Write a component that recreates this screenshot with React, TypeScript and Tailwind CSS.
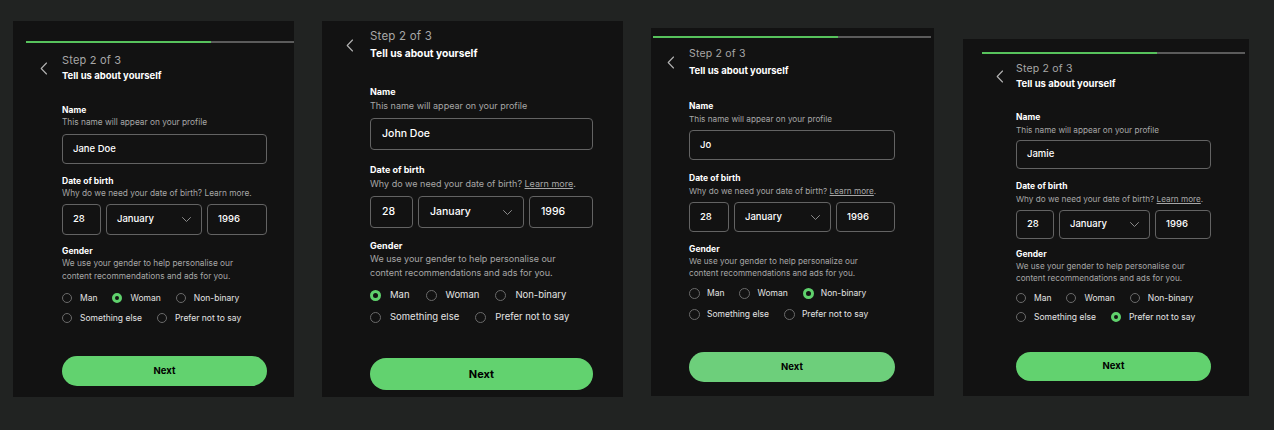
import React from 'react'

type Cfg = {
  name: string
  gender: string
  spelling: string
  underline: boolean
  card: string
  bar?: { wrap: string; fill: string }
  head: string
  chev: string
  headGap: string
  step: string
  title: string
  body: string
  nameMt: string
  label: string
  sub: string
  subGap: string
  inputMt: string
  inputH: string
  inputText: string
  dobMt: string
  dateMt: string
  dateH: string
  day: string
  year: string
  dateGap: string
  genderMt: string
  desc: string
  radiosMt: string
  rowGap: string
  rowH: string
  itemGap: string
  circle: string
  dot: string
  radioGap: string
  radioText: string
  btn: string
  btnText: string
  btnColor: string
  pb: string
}

const cards: Cfg[] = [
  {
    name: 'Jane Doe', gender: 'Woman', spelling: 'personalise', underline: false,
    card: 'mt-[21px] w-[281px] h-[376px]',
    bar: { wrap: 'mt-[20px] ml-[13px] h-[2px]', fill: 'w-[69%]' },
    head: 'mt-[10px] pl-[27px]', chev: 'w-[22px]', headGap: 'gap-[2px]',
    step: 'text-[11px] leading-[14px] tracking-[0.2px]', title: 'text-[9.5px] leading-[14px]',
    body: 'pl-[49px] pr-[27px]', nameMt: 'mt-[21px]',
    label: 'text-[8.5px] leading-[12px]', sub: 'text-[8.3px] leading-[12px]', subGap: 'mt-0',
    inputMt: 'mt-[6px]', inputH: 'h-[30px]', inputText: 'text-[9.5px] px-[10px]',
    dobMt: 'mt-[11px]', dateMt: 'mt-[5px]', dateH: 'h-[31px]', day: 'w-[39px]', year: 'w-[60px]', dateGap: 'gap-[5px]',
    genderMt: 'mt-[10px]', desc: 'text-[8.3px] leading-[13px]',
    radiosMt: 'mt-[8px]', rowGap: 'gap-[6px]', rowH: 'h-[14px]', itemGap: 'gap-[15px]',
    circle: 'w-[10px] h-[10px]', dot: 'border-[3px]', radioGap: 'gap-[8px]', radioText: 'text-[8.5px]',
    btn: 'h-[30px]', btnText: 'text-[9.5px]', btnColor: 'bg-[#62d26f]', pb: 'pb-[11px]',
  },
  {
    name: 'John Doe', gender: 'Man', spelling: 'personalise', underline: true,
    card: 'mt-[21px] w-[301px] h-[376px]',
    head: 'mt-[8px] pl-[24px]', chev: 'w-[24px]', headGap: 'gap-[2px]',
    step: 'text-[11.5px] leading-[15px] tracking-[0.2px]', title: 'text-[10.25px] leading-[15px]',
    body: 'pl-[48px] pr-[30px]', nameMt: 'mt-[24px]',
    label: 'text-[9px] leading-[13px]', sub: 'text-[9px] leading-[13px]', subGap: 'mt-[1px]',
    inputMt: 'mt-[6px]', inputH: 'h-[32px]', inputText: 'text-[10.5px] px-[11px]',
    dobMt: 'mt-[13px]', dateMt: 'mt-[6px]', dateH: 'h-[32px]', day: 'w-[43px]', year: 'w-[64px]', dateGap: 'gap-[5px]',
    genderMt: 'mt-[11px]', desc: 'text-[9px] leading-[14px]',
    radiosMt: 'mt-[7px]', rowGap: 'gap-[6px]', rowH: 'h-[16px]', itemGap: 'gap-[16px]',
    circle: 'w-[11px] h-[11px]', dot: 'border-[3px]', radioGap: 'gap-[9px]', radioText: 'text-[9.5px]',
    btn: 'h-[32px]', btnText: 'text-[11px]', btnColor: 'bg-[#62d26f]', pb: 'pb-[7px]',
  },
  {
    name: 'Jo', gender: 'Non-binary', spelling: 'personalize', underline: true,
    card: 'mt-[28px] ml-0 w-[283px] h-[368px]',
    bar: { wrap: 'mt-[8px] ml-[2px] mr-[3px] h-[2px]', fill: 'w-[66.5%]' },
    head: 'mt-[9px] pl-[16px]', chev: 'w-[22px]', headGap: 'gap-[3px]',
    step: 'text-[10.5px] leading-[14px] tracking-[0.2px]', title: 'text-[9.5px] leading-[14px]',
    body: 'pl-[38px] pr-[39px]', nameMt: 'mt-[22px]',
    label: 'text-[8.5px] leading-[12px]', sub: 'text-[8.2px] leading-[12px]', subGap: 'mt-[1px]',
    inputMt: 'mt-[5px]', inputH: 'h-[30px]', inputText: 'text-[9.5px] px-[10px]',
    dobMt: 'mt-[12px]', dateMt: 'mt-[5px]', dateH: 'h-[30px]', day: 'w-[40px]', year: 'w-[59px]', dateGap: 'gap-[5px]',
    genderMt: 'mt-[11px]', desc: 'text-[8.2px] leading-[12px]',
    radiosMt: 'mt-[7px]', rowGap: 'gap-[7px]', rowH: 'h-[14px]', itemGap: 'gap-[15px]',
    circle: 'w-[11px] h-[11px]', dot: 'border-[3px]', radioGap: 'gap-[7px]', radioText: 'text-[8.5px]',
    btn: 'h-[30px]', btnText: 'text-[9.5px]', btnColor: 'bg-[#6dcf7b]', pb: 'pb-[14px]',
  },
  {
    name: 'Jamie', gender: 'Prefer not to say', spelling: 'personalise', underline: true,
    card: 'mt-[39px] ml-[1px] w-[286px] h-[357px]',
    bar: { wrap: 'mt-[13px] ml-[19px] mr-[4px] h-[2px]', fill: 'w-[66.5%]' },
    head: 'mt-[8px] pl-[33px]', chev: 'w-[20px]', headGap: 'gap-[1px]',
    step: 'text-[10.5px] leading-[14px] tracking-[0.2px]', title: 'text-[9.5px] leading-[14px]',
    body: 'pl-[53px] pr-[38px]', nameMt: 'mt-[20px]',
    label: 'text-[8.5px] leading-[12px]', sub: 'text-[8.2px] leading-[12px]', subGap: 'mt-[1px]',
    inputMt: 'mt-[4px]', inputH: 'h-[29px]', inputText: 'text-[9.5px] px-[10px]',
    dobMt: 'mt-[11px]', dateMt: 'mt-[5px]', dateH: 'h-[29px]', day: 'w-[38px]', year: 'w-[56px]', dateGap: 'gap-[5px]',
    genderMt: 'mt-[9px]', desc: 'text-[8.2px] leading-[12px]',
    radiosMt: 'mt-[7px]', rowGap: 'gap-[5px]', rowH: 'h-[14px]', itemGap: 'gap-[15px]',
    circle: 'w-[10px] h-[10px]', dot: 'border-[3px]', radioGap: 'gap-[8px]', radioText: 'text-[8.5px]',
    btn: 'h-[29px]', btnText: 'text-[9.5px]', btnColor: 'bg-[#62d26f]', pb: 'pb-[15px]',
  },
]

function Radio({ c, label }: { c: Cfg; label: string }) {
  const on = c.gender === label
  return (
    <div className={`flex items-center ${c.radioGap}`}>
      <span
        className={`${c.circle} rounded-full shrink-0 ${on ? `${c.dot} border-[#5fd16c]` : 'border border-[#6a6a6a]'}`}
      />
      <span className={`${c.radioText} text-[#e4e4e4] whitespace-nowrap`}>{label}</span>
    </div>
  )
}

function Card({ c }: { c: Cfg }) {
  return (
    <div className={`${c.card} ${c.pb} shrink-0 bg-[#121212] flex flex-col`}>
      {c.bar ? (
        <div className={`${c.bar.wrap} bg-[#5b5b5b] flex`}>
          <div className={`${c.bar.fill} h-full bg-[#57c25c]`} />
        </div>
      ) : null}

      {/* header */}
      <div className={`${c.head} flex items-center`}>
        <div className={`${c.chev} shrink-0`}>
          <svg width="8" height="13" viewBox="0 0 8 13" fill="none">
            <path d="M6.5 1L1.2 6.5l5.3 5.5" stroke="#b3b3b3" strokeWidth="1.1" strokeLinecap="round" strokeLinejoin="round" />
          </svg>
        </div>
        <div className={`flex flex-col ${c.headGap}`}>
          <span className={`${c.step} text-[#a7a7a7]`}>Step 2 of 3</span>
          <span className={`${c.title} text-white font-bold`}>Tell us about yourself</span>
        </div>
      </div>

      <div className={`${c.body} flex flex-col flex-1`}>
        {/* name */}
        <div className={`${c.nameMt} flex flex-col`}>
          <span className={`${c.label} text-white font-bold`}>Name</span>
          <span className={`${c.sub} ${c.subGap} text-[#a7a7a7]`}>This name will appear on your profile</span>
        </div>
        <div className={`${c.inputMt} ${c.inputH} ${c.inputText} border border-[#636363] rounded-[4px] flex items-center text-white font-medium`}>
          {c.name}
        </div>

        {/* date of birth */}
        <div className={`${c.dobMt} flex flex-col`}>
          <span className={`${c.label} text-white font-bold`}>Date of birth</span>
          <span className={`${c.sub} ${c.subGap} text-[#a7a7a7] whitespace-nowrap`}>
            Why do we need your date of birth?{' '}
            <span className={c.underline ? 'underline' : ''}>Learn more</span>.
          </span>
        </div>
        <div className={`${c.dateMt} ${c.dateH} ${c.dateGap} flex`}>
          <div className={`${c.day} ${c.inputText} border border-[#636363] rounded-[4px] flex items-center text-white font-medium`}>28</div>
          <div className={`flex-1 ${c.inputText} border border-[#636363] rounded-[4px] flex items-center justify-between text-white font-medium`}>
            <span>January</span>
            <svg width="9" height="5" viewBox="0 0 9 5" fill="none">
              <path d="M0.5 0.5l4 4 4-4" stroke="#8a8a8a" strokeWidth="1" strokeLinecap="round" strokeLinejoin="round" />
            </svg>
          </div>
          <div className={`${c.year} ${c.inputText} border border-[#636363] rounded-[4px] flex items-center text-white font-medium`}>1996</div>
        </div>

        {/* gender */}
        <div className={`${c.genderMt} flex flex-col`}>
          <span className={`${c.label} text-white font-bold`}>Gender</span>
          <span className={`${c.desc} text-[#a7a7a7]`}>
            We use your gender to help {c.spelling} our
            <br />
            content recommendations and ads for you.
          </span>
        </div>
        <div className={`${c.radiosMt} ${c.rowGap} flex flex-col`}>
          <div className={`${c.rowH} ${c.itemGap} flex items-center`}>
            <Radio c={c} label="Man" />
            <Radio c={c} label="Woman" />
            <Radio c={c} label="Non-binary" />
          </div>
          <div className={`${c.rowH} ${c.itemGap} flex items-center`}>
            <Radio c={c} label="Something else" />
            <Radio c={c} label="Prefer not to say" />
          </div>
        </div>

        <button className={`mt-auto ${c.btn} ${c.btnColor} ${c.btnText} w-full rounded-full font-bold text-black`}>
          Next
        </button>
      </div>
    </div>
  )
}

export default function App() {
  return (
    <div className="w-[1274px] h-[430px] bg-[#212322] flex items-start pl-[13px] gap-[28px] font-[Inter,sans-serif] overflow-hidden">
      {cards.map((c, i) => (
        <Card key={i} c={c} />
      ))}
    </div>
  )
}
